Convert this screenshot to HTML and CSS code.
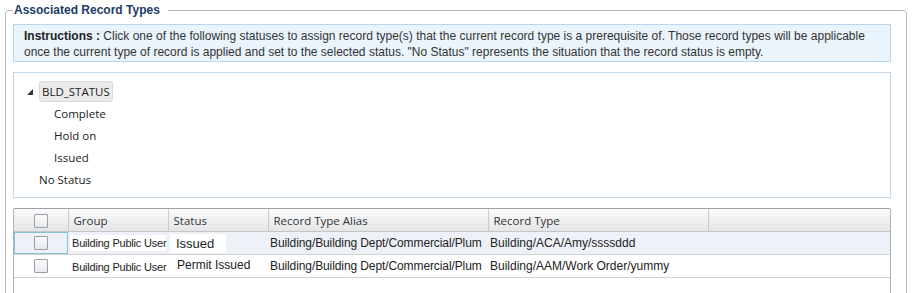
FILE: index.html
```html
<!DOCTYPE html>
<html lang="en">
<head>
  <meta charset="UTF-8">
  <title>Associated Record Types</title>
  <link rel="stylesheet" href="styles.css">
</head>
<body>
  <fieldset class="section">
    <legend class="section-title">Associated Record Types</legend>

    <div class="instructions">
      <strong>Instructions :</strong> Click one of the following statuses to assign record type(s) that the current record type is a prerequisite of. Those record types will be applicable once the current type of record is applied and set to the selected status. "No Status" represents the situation that the record status is empty.
    </div>

    <div class="tree">
      <div class="node root">
        <span class="toggle"></span>
        <span class="node-label selected">BLD_STATUS</span>
      </div>
      <div class="node child"><span class="node-label">Complete</span></div>
      <div class="node child"><span class="node-label">Hold on</span></div>
      <div class="node child"><span class="node-label">Issued</span></div>
      <div class="node top"><span class="node-label">No Status</span></div>
    </div>

    <div class="grid">
      <table>
        <colgroup>
          <col class="c-check">
          <col class="c-group">
          <col class="c-status">
          <col class="c-alias">
          <col class="c-type">
          <col>
        </colgroup>
        <thead>
          <tr>
            <th class="check"><span class="box"></span></th>
            <th>Group</th>
            <th>Status</th>
            <th>Record Type Alias</th>
            <th>Record Type</th>
            <th></th>
          </tr>
        </thead>
        <tbody>
          <tr class="alt">
            <td class="check focused"><span class="box"></span></td>
            <td><span class="hl small">Building Public User</span></td>
            <td><span class="hl big">Issued</span></td>
            <td><div class="clip">Building/Building Dept/Commercial/Plumbing</div></td>
            <td>Building/ACA/Amy/ssssddd</td>
            <td></td>
          </tr>
          <tr>
            <td class="check"><span class="box"></span></td>
            <td><span class="hl small low">Building Public User</span></td>
            <td><span class="raised">Permit Issued</span></td>
            <td><div class="clip">Building/Building Dept/Commercial/Plumbing</div></td>
            <td>Building/AAM/Work Order/yummy</td>
            <td></td>
          </tr>
        </tbody>
      </table>
    </div>
  </fieldset>
</body>
</html>
```

FILE: styles.css
```css
html, body {
  margin: 0;
  height: 293px;
  overflow: hidden;
  background: #fff;
}

body {
  font-family: "Liberation Sans", Arial, sans-serif;
  font-size: 12px;
  color: #333;
}

.section {
  margin: 3px 5px 0 5px;
  padding: 7px 15px 20px 7px;
  border: 1px solid #b5b5b5;
  border-radius: 4px;
  min-width: 0;
}

.section-title {
  font-weight: bold;
  font-size: 12px;
  color: #1d3c66;
  padding: 0 8px 0 1px;
  margin-left: 0;
  line-height: 14px;
}

.instructions {
  background: #eaf4fd;
  border: 1px solid #bcd6ee;
  padding: 3px 9px 1px 10px;
  line-height: 16px;
  color: #333;
}

.instructions strong {
  color: #222;
}

.tree {
  margin-top: 10px;
  height: 126px;
  border: 1px solid #c4d9ec;
  padding: 7px 0 0 10px;
  font-family: "Open Sans", "Segoe UI", sans-serif;
  font-size: 11.5px;
  color: #222;
  box-sizing: border-box;
}

.node {
  display: flex;
  align-items: center;
  height: 22px;
}

.toggle {
  width: 0;
  height: 0;
  border-left: 6px solid transparent;
  border-bottom: 6px solid #333;
  margin: 2px 6px 0 3px;
}

.node-label {
  padding: 1px 3px;
  border: 1px solid transparent;
  border-radius: 3px;
}

.node-label.selected {
  background: #ebebeb;
  border-color: #dadada;
  padding: 2px 2px;
}

.node.child {
  padding-left: 26px;
}

.node.top {
  padding-left: 11px;
}

.grid {
  margin-top: 10px;
  height: 110px;
  border: 1px solid #a9b2bb;
  border-top-color: #9aa3ad;
  border-radius: 2px 2px 0 0;
}

.grid table {
  width: 100%;
  border-collapse: collapse;
  table-layout: fixed;
}

.c-check { width: 54px; }
.c-group { width: 100px; }
.c-status { width: 100px; }
.c-alias { width: 220px; }
.c-type { width: 220px; }

.grid th {
  height: 22px;
  padding: 0 0 0 5px;
  text-align: left;
  font-family: "Open Sans", "Segoe UI", sans-serif;
  font-weight: normal;
  font-size: 11.5px;
  color: #333;
  background: linear-gradient(#fbfbfb, #e3e5e7);
  border-left: 1px solid #c8cacc;
  border-bottom: 1px solid #c3c6c9;
}

.grid th:first-child {
  border-left: none;
}

.grid td {
  height: 22px;
  padding: 0 0 0 2px;
  border-bottom: 1px solid #d0d3d6;
  white-space: nowrap;
  overflow: hidden;
  font-size: 12px;
  color: #222;
}

.grid tr.alt td {
  background: #eef2f8;
}

.grid .check {
  text-align: center;
  padding: 0;
}

.grid td.focused {
  box-shadow: inset 0 0 0 1px #7fc3d3;
}

.box {
  display: inline-block;
  width: 12px;
  height: 12px;
  border: 1px solid #9a9fa5;
  border-radius: 1px;
  background: linear-gradient(#fdfdfd, #e6e8ea);
  vertical-align: middle;
}

.hl {
  background: #fff;
  padding: 2px 0;
}

.small {
  font-size: 11px;
  letter-spacing: -0.2px;
  padding-left: 2px;
}

.small.low {
  position: relative;
  top: 1px;
}

.big {
  font-size: 13px;
  padding: 2px 12px 2px 6px;
}

.raised {
  position: relative;
  top: -1px;
  padding-left: 7px;
}

.clip {
  overflow: hidden;
  text-overflow: clip;
  width: 212px;
  letter-spacing: -0.1px;
}
```
